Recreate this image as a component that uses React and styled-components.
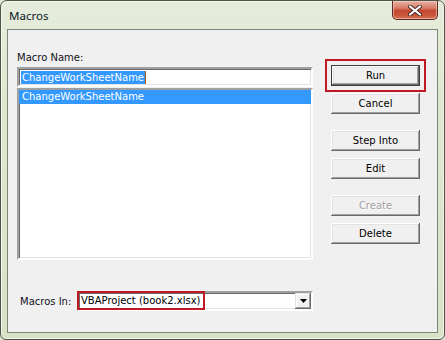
import styled, { createGlobalStyle, css } from "styled-components";

const GlobalStyle = createGlobalStyle`
    html, body {
        margin : 0;
        padding : 0;
        background : #dfe6d0;
    }
    * {
        box-sizing : border-box;
    }
`

const uiFont = `"DejaVu Sans", "Liberation Sans", sans-serif`;

const uiText = css`
    font-family : ${uiFont};
    font-size : 10px;
`

const sunken = css`
    border-style : solid;
    border-width : 2px;
    border-color : #a0a0a0 #ffffff #ffffff #a0a0a0;
    box-shadow : inset 1px 1px 0 #696969, inset -1px -1px 0 #e3e3e3;
`

const Window = styled.div`
    width : 445px;
    height : 340px;
    display : flex;
    flex-direction : column;
    padding : 0 6px 6px 6px;
    border : 1px solid #4b5446;
    border-radius : 7px 7px 6px 6px;
    background : linear-gradient(180deg, #e6ecdc 0%, #dfe7cf 30%, #d9e2c6 100%);
    box-shadow : inset 1px 1px 0 #f6f8ef, inset -1px -1px 0 #f2f5ea;
    font-family : ${uiFont};
`

const TitleBar = styled.div`
    height : 28px;
    display : flex;
    align-items : flex-start;
    justify-content : space-between;

    .title {
        margin-top : 7px;
        margin-left : 2px;
        font-family : "Noto Sans", "Open Sans", sans-serif;
        font-size : 11.5px;
        color : #0b1626;
    }
`

const CloseButton = styled.div`
    width : 46px;
    height : 19px;
    border : 1px solid #5c2a22;
    border-top : none;
    border-radius : 0 0 5px 5px;
    background : linear-gradient(180deg, #e8b2a6 0%, #d77a66 40%, #c44a32 52%, #c9553a 80%, #d8775f 100%);
    box-shadow : inset 0 0 0 1px rgba(255, 220, 210, 0.5);
    display : flex;
    justify-content : center;
    align-items : center;
`

const Client = styled.div`
    flex : 1;
    display : flex;
    border : 1px solid #7d8578;
    background : #f0f0f0;
    padding : 21px 0 21px 9px;
`

const LeftColumn = styled.div`
    width : 296px;
    display : flex;
    flex-direction : column;
`

const Label = styled.div`
    ${uiText};
    line-height : 14px;
    color : #101020;
    margin-bottom : 2px;
`

const TextBox = styled.div`
    ${sunken};
    height : 20px;
    background : #fff;
    display : flex;
    align-items : center;
    padding-left : 2px;

    .selected {
        ${uiText};
        background : #3399ff;
        color : #fff;
        line-height : 13px;
        padding : 0 1px;
        border-right : 1px solid #b05a10;
    }
`

const ListBox = styled.div`
    ${sunken};
    margin-top : 1px;
    height : 172px;
    background : #fff;
`

const ListItem = styled.div`
    ${uiText};
    line-height : 14px;
    padding-left : 3px;
    color : ${props => props.$selected ? '#fff' : '#000'};
    background : ${props => props.$selected ? '#3399ff' : 'transparent'};
`

const MacrosInRow = styled.div`
    margin-top : auto;
    display : flex;
    align-items : center;
    height : 20px;

    .label {
        ${uiText};
        width : 60px;
        padding-left : 3px;
        color : #101020;
    }
`

const Select = styled.div`
    ${sunken};
    flex : 1;
    height : 20px;
    background : #fff;
    display : flex;
    align-items : stretch;

    .value {
        ${uiText};
        margin : -2px 0 -1px -2px;
        border : 2px solid #bd1a22;
        padding : 0 3px 0 2px;
        display : flex;
        align-items : center;
        color : #000;
    }

    .arrow {
        margin-left : auto;
        width : 16px;
        background : #f0f0f0;
        box-shadow : inset -1px -1px 0 #696969, inset 1px 1px 0 #e3e3e3, inset -2px -2px 0 #a0a0a0, inset 2px 2px 0 #fff;
        display : flex;
        justify-content : center;
        align-items : center;
    }
`

const RightColumn = styled.div`
    margin-left : 18px;
    padding-top : 14px;
    display : flex;
    flex-direction : column;
`

const ButtonGroup = styled.div`
    display : flex;
    flex-direction : column;
    gap : 7px;
    margin-bottom : 16px;
`

const Button = styled.button`
    ${uiText};
    width : 89px;
    height : 21px;
    padding : 0;
    border : none;
    background : #f0f0f0;
    color : ${props => props.disabled ? '#a0a0a0' : '#000'};
    text-shadow : ${props => props.disabled ? '1px 1px 0 #fff' : 'none'};
    box-shadow : inset -1px -1px 0 #696969, inset 1px 1px 0 #fff, inset -2px -2px 0 #a0a0a0, inset 2px 2px 0 #e3e3e3;

    ${props => props.$default && css`
        border : 1px solid #3c3c3c;
        outline : 2px solid #bd1a22;
        outline-offset : 4px;
    `}
`

const App = () => {
    return (
        <>
            <GlobalStyle />
            <Window>
                <TitleBar>
                    <span className="title">Macros</span>
                    <CloseButton>
                        <svg width="14" height="11" viewBox="0 0 14 11">
                            <path d="M2 1.5 L12 9.5 M12 1.5 L2 9.5" stroke="#4a2a26" strokeWidth="4" strokeLinecap="round" />
                            <path d="M2 1.5 L12 9.5 M12 1.5 L2 9.5" stroke="#ffffff" strokeWidth="2.2" strokeLinecap="round" />
                        </svg>
                    </CloseButton>
                </TitleBar>
                <Client>
                    <LeftColumn>
                        <Label>Macro Name:</Label>
                        <TextBox>
                            <span className="selected">ChangeWorkSheetName</span>
                        </TextBox>
                        <ListBox>
                            <ListItem $selected>ChangeWorkSheetName</ListItem>
                        </ListBox>
                        <MacrosInRow>
                            <span className="label">Macros In:</span>
                            <Select>
                                <span className="value">VBAProject (book2.xlsx)</span>
                                <span className="arrow">
                                    <svg width="7" height="4" viewBox="0 0 7 4">
                                        <path d="M0 0 H7 L3.5 4 Z" fill="#000" />
                                    </svg>
                                </span>
                            </Select>
                        </MacrosInRow>
                    </LeftColumn>
                    <RightColumn>
                        <ButtonGroup>
                            <Button $default>Run</Button>
                            <Button>Cancel</Button>
                        </ButtonGroup>
                        <ButtonGroup>
                            <Button>Step Into</Button>
                            <Button>Edit</Button>
                        </ButtonGroup>
                        <ButtonGroup>
                            <Button disabled>Create</Button>
                            <Button>Delete</Button>
                        </ButtonGroup>
                    </RightColumn>
                </Client>
            </Window>
        </>
    )
}

export default App;
